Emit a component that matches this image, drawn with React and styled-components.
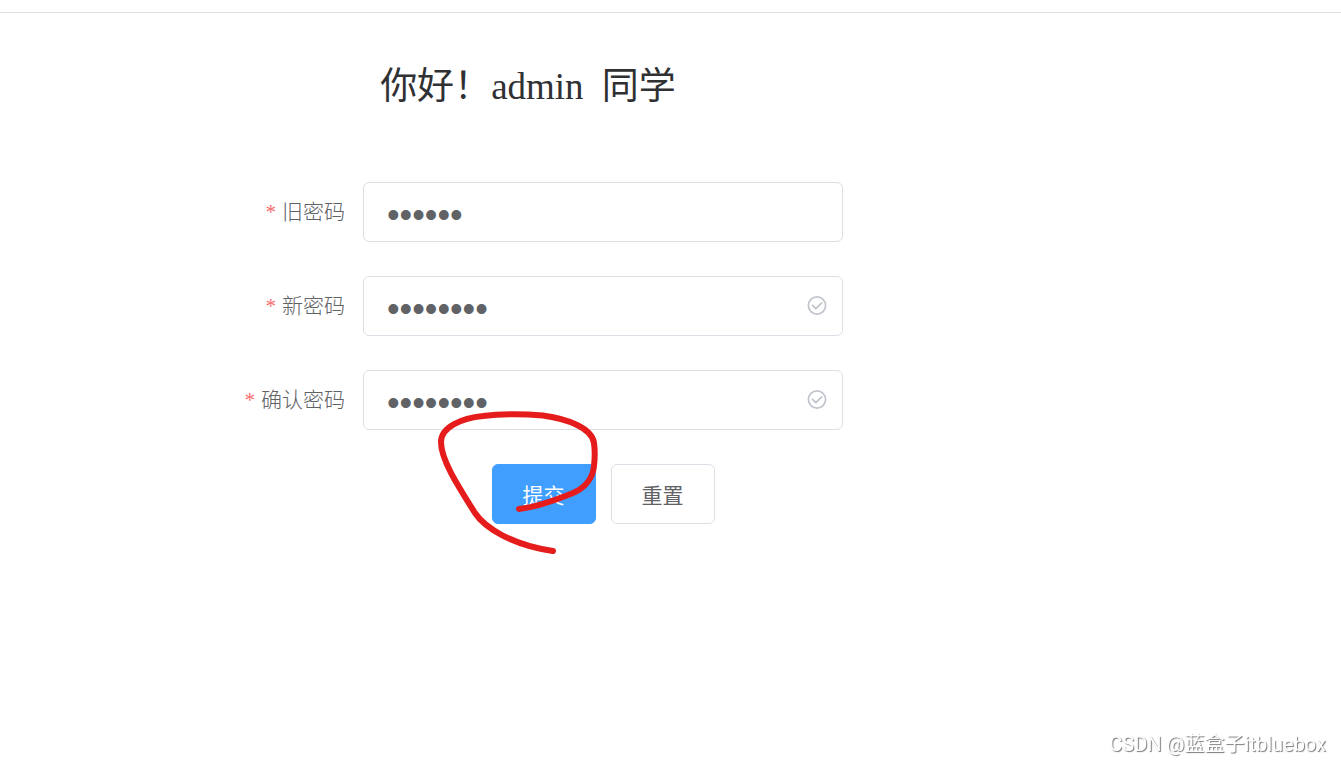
import React, { useState } from 'react';
import styled, { createGlobalStyle, css } from 'styled-components';

const colors = {
    primary: '#409eff',
    danger: '#f56c6c',
    title: '#303133',
    text: '#606266',
    border: '#dcdfe6',
    icon: '#c0c4cc',
    marker: '#e61c1c',
};

const GlobalStyle = createGlobalStyle`
    body {
        margin: 0;
        background: #fff;
        color: ${colors.text};
        font-family: "Liberation Serif", "Noto Sans CJK SC", serif;
    }
    * { box-sizing: border-box; }
`;

const TopBar = styled.header`
    height: 13px;
    border-bottom: 1px solid ${colors.border};
`;

const Content = styled.main`
    max-width: 843px;
    padding: 47px 0 60px 213px;
`;

const Title = styled.h2`
    margin: 0 0 68px;
    color: ${colors.title};
    font-size: 37px;
    font-weight: 400;
    line-height: 54px;
    text-align: center;
`;

const UserName = styled.span`
    margin-right: 9px;
`;

const Form = styled.form`
    display: flex;
    flex-direction: column;
    gap: 34px;
`;

const Row = styled.div`
    display: grid;
    grid-template-columns: 150px minmax(0, 1fr);
    align-items: center;
`;

const Label = styled.label`
    padding-right: 18px;
    font-size: 21px;
    font-weight: 300;
    line-height: 60px;
    text-align: right;
    white-space: nowrap;

    &::before {
        content: "*";
        margin-right: 6px;
        color: ${colors.danger};
    }
`;

const InputBox = styled.div`
    display: flex;
    align-items: center;
    height: 60px;
    padding: 0 15px 0 23px;
    border: 1px solid ${colors.border};
    border-radius: 6px;
`;

const Input = styled.input`
    flex: 1;
    min-width: 0;
    height: 100%;
    padding: 5px 0 0;
    border: 0;
    outline: 0;
    background: none;
    color: ${colors.text};
    font-family: "Liberation Sans", sans-serif;
    font-size: 36px;
`;

const Actions = styled.div`
    display: flex;
    justify-content: center;
    gap: 15px;
    margin-left: 150px;
`;

const Marked = styled.div`
    position: relative;
`;

const Button = styled.button`
    width: 104px;
    height: 60px;
    padding: 0;
    border: 1px solid ${colors.border};
    border-radius: 6px;
    background: #fff;
    color: ${colors.text};
    font-family: inherit;
    font-size: 21px;
    cursor: pointer;

    ${({ primary }) => primary && css`
        border-color: ${colors.primary};
        background: ${colors.primary};
        color: #fff;
    `}
`;

const Scribble = styled.svg`
    position: absolute;
    top: -53px;
    left: -54px;
    pointer-events: none;
`;

const Watermark = styled.footer`
    position: fixed;
    right: 15px;
    bottom: 5px;
    color: #fff;
    font-family: Roboto, "Noto Sans CJK SC", sans-serif;
    font-size: 20px;
    line-height: 28px;
    text-shadow: 1px 1px 1px #777;
`;

const CheckIcon = () => (
    <svg width="20" height="20" viewBox="0 0 20 20" fill="none" stroke={colors.icon} strokeWidth="1.7">
        <circle cx="10" cy="9.500" r="8.6" />
        <path d="M5.500 9.300l3.300 3.400 6-5.900" strokeLinecap="round" strokeLinejoin="round" />
    </svg>
);

const Field = ({ id, label, value, onChange, valid }) => (
    <Row>
        <Label htmlFor={id}>{label}</Label>
        <InputBox>
            <Input id={id} type="password" autoComplete="off" value={value} onChange={(e) => onChange(id, e.target.value)} />
            {valid && <CheckIcon />}
        </InputBox>
    </Row>
);

const initial = { oldPass: '123456', newPass: '12345678', checkPass: '12345678' };

const App = () => {
    const [form, setForm] = useState(initial);
    const change = (id, value) => setForm({ ...form, [id]: value });
    const reset = () => setForm({ oldPass: '', newPass: '', checkPass: '' });

    return (
        <>
            <GlobalStyle />
            <TopBar />
            <Content>
                <Title>你好！<UserName>admin</UserName> 同学</Title>
                <Form onSubmit={(e) => e.preventDefault()}>
                    <Field id="oldPass" label="旧密码" value={form.oldPass} onChange={change} />
                    <Field id="newPass" label="新密码" value={form.newPass} onChange={change} valid />
                    <Field id="checkPass" label="确认密码" value={form.checkPass} onChange={change} valid />
                    <Actions>
                        <Marked>
                            <Button type="submit" primary>提交</Button>
                            <Scribble width="164" height="148" viewBox="438 411 164 148" fill="none" stroke={colors.marker} strokeWidth="6" strokeLinecap="round" strokeLinejoin="round" aria-hidden="true">
                                <path d="M519 509C536 507 556 500 573 493C587 487 593 476 594 466C595 457 595 450 594 443C592 428 568 419 543 415.500C525 414 500 414 483 416C462 418 441 427 441 442C441 459 456 483 475 513C485 528 512 545 553 551" />
                            </Scribble>
                        </Marked>
                        <Button type="button" onClick={reset}>重置</Button>
                    </Actions>
                </Form>
            </Content>
            <Watermark>CSDN @蓝盒子itbluebox</Watermark>
        </>
    );
};

export default App;
